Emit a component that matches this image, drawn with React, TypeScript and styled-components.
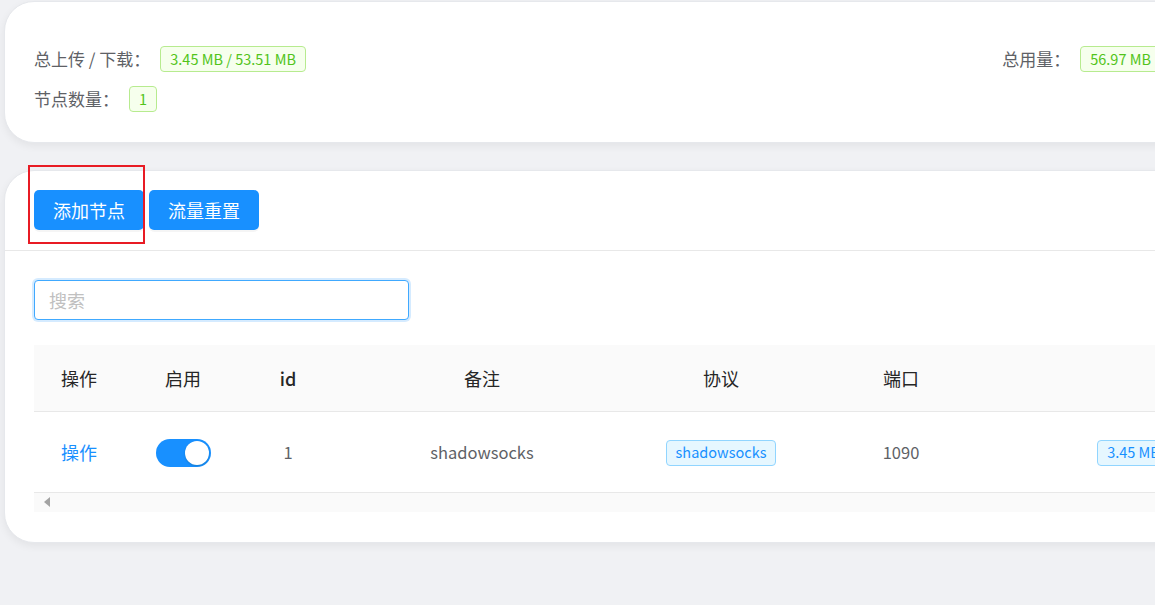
import React from "react";
import styled, { createGlobalStyle } from "styled-components";

const Global = createGlobalStyle`
  html, body { margin: 0; padding: 0; background: #f0f1f4; overflow: hidden; }
  body { font-family: "Noto Sans CJK SC", "Noto Sans", sans-serif; }
  * { box-sizing: border-box; }
`;

const Page = styled.div`
  position: relative;
  width: 1192px;
  padding: 1px 0 60px 4px;
  display: flex;
  flex-direction: column;
  gap: 27px;
`;

const Card = styled.section`
  background: #fff;
  border: 1px solid #e6e8ec;
  border-radius: 30px;
  box-shadow: 0 3px 8px rgba(0, 0, 0, 0.06);
  overflow: hidden;
`;

const StatsCard = styled(Card)`
  padding: 44px 30px 30px 29px;
  display: grid;
  grid-template-columns: 1fr auto;
  row-gap: 14px;
`;

const StatRow = styled.div`
  display: flex;
  align-items: center;
  height: 26px;
`;

const Label = styled.span`
  font-size: 17px;
  color: #5e6166;
  line-height: 26px;
  margin-right: 10px;
`;

const Tag = styled.span<{ $tone: "green" | "blue" }>`
  display: inline-flex;
  align-items: center;
  height: 26px;
  padding: 0 9px;
  border-radius: 4px;
  font-size: 14.5px;
  line-height: 1;
  white-space: nowrap;
  border: 1px solid ${(p) => (p.$tone === "green" ? "#b7eb8f" : "#91d5ff")};
  background: ${(p) => (p.$tone === "green" ? "#f6ffed" : "#e6f7ff")};
  color: ${(p) => (p.$tone === "green" ? "#52c41a" : "#1890ff")};
`;

const Toolbar = styled.div`
  display: flex;
  gap: 5px;
  padding: 19px 30px 20px 29px;
  border-bottom: 1px solid #e8e8e8;
`;

const Button = styled.button`
  height: 40px;
  width: 110px;
  border: none;
  border-radius: 5px;
  background: #1890ff;
  color: #fff;
  font-family: inherit;
  font-size: 18px;
  line-height: 40px;
  padding: 0;
  box-shadow: 0 2px 0 rgba(0, 0, 0, 0.04);
`;

const Body = styled.div`
  padding: 29px 30px 30px 29px;
  display: flex;
  flex-direction: column;
  gap: 25px;
`;

const Search = styled.input`
  width: 375px;
  height: 40px;
  border: 1px solid #40a9ff;
  border-radius: 4px;
  box-shadow: 0 0 0 2px rgba(24, 144, 255, 0.18);
  padding: 0 14px;
  font-family: inherit;
  font-size: 18px;
  color: #333;
  outline: none;
  &::placeholder { color: #c0c0c0; }
`;

const TableWrap = styled.div`
  overflow: hidden;
`;

const Table = styled.table`
  width: 1316px;
  table-layout: fixed;
  border-collapse: collapse;
`;

const Th = styled.th<{ $latin?: boolean }>`
  height: 66px;
  background: #fafafa;
  border-bottom: 1px solid #e8e8e8;
  font-size: 18px;
  font-weight: ${(p) => (p.$latin ? 500 : 400)};
  color: #262626;
  text-align: center;
  padding: 0;
`;

const Td = styled.td<{ $link?: boolean; $latin?: boolean }>`
  height: 81px;
  border-bottom: 1px solid #e8e8e8;
  font-size: ${(p) => (p.$latin ? "16.5px" : "18px")};
  color: ${(p) => (p.$link ? "#1890ff" : "#5e6166")};
  text-align: center;
  padding: 0;
  white-space: nowrap;
`;

const Switch = styled.span`
  display: inline-flex;
  align-items: center;
  justify-content: flex-end;
  width: 55px;
  height: 28px;
  border-radius: 14px;
  background: #1890ff;
  padding: 2px;
  vertical-align: middle;
  &::after {
    content: "";
    width: 24px;
    height: 24px;
    border-radius: 50%;
    background: #fff;
    box-shadow: 0 1px 2px rgba(0, 35, 11, 0.2);
  }
`;

const ScrollTrack = styled.div`
  height: 19px;
  background: #fafafa;
  display: flex;
  align-items: center;
  padding-left: 10px;
`;

const ArrowLeft = styled.span`
  width: 0;
  height: 0;
  border-top: 5px solid transparent;
  border-bottom: 5px solid transparent;
  border-right: 6px solid #a3a3a3;
`;

const Marker = styled.div`
  position: absolute;
  left: 28px;
  top: 165px;
  width: 117px;
  height: 79px;
  border: 2px solid #e81b24;
  pointer-events: none;
`;

const columns = [
  { key: "op", title: "操作", width: 90 },
  { key: "on", title: "启用", width: 118 },
  { key: "id", title: "id", width: 92, latin: true },
  { key: "remark", title: "备注", width: 296 },
  { key: "proto", title: "协议", width: 182 },
  { key: "port", title: "端口", width: 178 },
  { key: "traffic", title: "", width: 360 },
];

export default function App() {
  return (
    <>
      <Global />
      <Page>
        <StatsCard>
          <StatRow>
            <Label>总上传 / 下载：</Label>
            <Tag $tone="green">3.45 MB / 53.51 MB</Tag>
          </StatRow>
          <StatRow>
            <Label>总用量：</Label>
            <Tag $tone="green">56.97 MB</Tag>
          </StatRow>
          <StatRow>
            <Label>节点数量：</Label>
            <Tag $tone="green">1</Tag>
          </StatRow>
        </StatsCard>

        <Card>
          <Toolbar>
            <Button>添加节点</Button>
            <Button>流量重置</Button>
          </Toolbar>
          <Body>
            <Search placeholder="搜索" />
            <TableWrap>
              <Table>
                <colgroup>
                  {columns.map((c) => (
                    <col key={c.key} style={{ width: c.width }} />
                  ))}
                </colgroup>
                <thead>
                  <tr>
                    {columns.map((c) => (
                      <Th key={c.key} $latin={c.latin}>
                        {c.title}
                      </Th>
                    ))}
                  </tr>
                </thead>
                <tbody>
                  <tr>
                    <Td $link>操作</Td>
                    <Td>
                      <Switch />
                    </Td>
                    <Td $latin>1</Td>
                    <Td $latin>shadowsocks</Td>
                    <Td>
                      <Tag $tone="blue">shadowsocks</Tag>
                    </Td>
                    <Td $latin>1090</Td>
                    <Td>
                      <Tag $tone="blue">3.45 MB / 53.51 MB</Tag>
                    </Td>
                  </tr>
                </tbody>
              </Table>
              <ScrollTrack>
                <ArrowLeft />
              </ScrollTrack>
            </TableWrap>
          </Body>
        </Card>
        <Marker />
      </Page>
    </>
  );
}
